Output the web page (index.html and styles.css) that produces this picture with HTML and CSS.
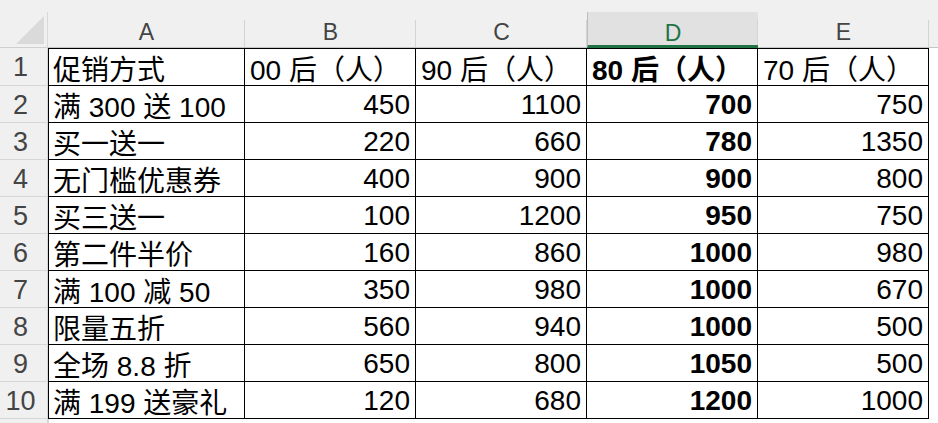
FILE: index.html
```html
<!DOCTYPE html>
<html lang="zh-CN">
<head>
<meta charset="utf-8">
<title>促销方式</title>
<link rel="stylesheet" href="styles.css">
</head>
<body>
<div class="sheet">
  <div class="strip"></div>

  <div class="corner"><svg width="30" height="30" viewBox="0 0 30 30"><polygon points="29,1 29,29 1,29" fill="#dadada"/></svg></div>
  <div class="colh">A</div>
  <div class="colh">B</div>
  <div class="colh">C</div>
  <div class="colh sel">D</div>
  <div class="colh">E</div>
  <div class="colh fill"></div>

  <div class="rowh">1</div>
  <div class="c ca r1">促销方式</div>
  <div class="c r1">00 后（人）</div>
  <div class="c r1">90 后（人）</div>
  <div class="c r1 b">80 后（人）</div>
  <div class="c r1">70 后（人）</div>
  <div class="fillc"></div>

  <div class="rowh">2</div>
  <div class="c ca">满 300 送 100</div>
  <div class="c num">450</div>
  <div class="c num">1100</div>
  <div class="c num b">700</div>
  <div class="c num">750</div>
  <div class="fillc"></div>

  <div class="rowh">3</div>
  <div class="c ca">买一送一</div>
  <div class="c num">220</div>
  <div class="c num">660</div>
  <div class="c num b">780</div>
  <div class="c num">1350</div>
  <div class="fillc"></div>

  <div class="rowh">4</div>
  <div class="c ca">无门槛优惠券</div>
  <div class="c num">400</div>
  <div class="c num">900</div>
  <div class="c num b">900</div>
  <div class="c num">800</div>
  <div class="fillc"></div>

  <div class="rowh">5</div>
  <div class="c ca">买三送一</div>
  <div class="c num">100</div>
  <div class="c num">1200</div>
  <div class="c num b">950</div>
  <div class="c num">750</div>
  <div class="fillc"></div>

  <div class="rowh">6</div>
  <div class="c ca">第二件半价</div>
  <div class="c num">160</div>
  <div class="c num">860</div>
  <div class="c num b">1000</div>
  <div class="c num">980</div>
  <div class="fillc"></div>

  <div class="rowh">7</div>
  <div class="c ca">满 100 减 50</div>
  <div class="c num">350</div>
  <div class="c num">980</div>
  <div class="c num b">1000</div>
  <div class="c num">670</div>
  <div class="fillc"></div>

  <div class="rowh">8</div>
  <div class="c ca">限量五折</div>
  <div class="c num">560</div>
  <div class="c num">940</div>
  <div class="c num b">1000</div>
  <div class="c num">500</div>
  <div class="fillc"></div>

  <div class="rowh">9</div>
  <div class="c ca">全场 8.8 折</div>
  <div class="c num">650</div>
  <div class="c num">800</div>
  <div class="c num b">1050</div>
  <div class="c num">500</div>
  <div class="fillc"></div>

  <div class="rowh">10</div>
  <div class="c ca">满 199 送豪礼</div>
  <div class="c num">120</div>
  <div class="c num">680</div>
  <div class="c num b">1200</div>
  <div class="c num">1000</div>
  <div class="fillc"></div>

  <div class="rowh last"></div>
  <div class="tail"></div>
</div>
</body>
</html>
```

FILE: styles.css
```css
* { box-sizing: border-box; }
html, body {
  margin: 0;
  padding: 0;
  background: #ffffff;
  width: 938px;
  height: 423px;
  overflow: hidden;
}
.sheet {
  display: grid;
  grid-template-columns: 48px 197px 171px 171px 171px 171px 1fr;
  grid-template-rows: 12px 36px 38px repeat(9, 37px) 1fr;
  width: 938px;
  height: 423px;
  font-family: "Liberation Sans", "Noto Sans CJK SC", sans-serif;
  color: #000;
}
.strip {
  grid-column: 1 / -1;
  background: #f0f0f0;
}
.corner {
  background: #f0f0f0;
  border-bottom: 1px solid #cfcfcf;
  border-right: 1px solid #d8d8d8;
  display: flex;
  align-items: flex-start;
  padding: 3px 0 0 15px;
}
.colh {
  position: relative;
  background: #f0f0f0;
  border-bottom: 1px solid #c6c6c6;
  color: #444;
  font-size: 23px;
  display: flex;
  align-items: center;
  justify-content: center;
  padding-top: 6px;
}
.colh::after {
  content: "";
  position: absolute;
  right: 0;
  top: 8px;
  bottom: 0;
  width: 1px;
  background: #d4d4d4;
}
.colh.fill::after { display: none; }
.colh.sel {
  background: #e1e1e1;
  color: #217346;
  border-bottom: 3px solid #217346;
  border-left: 1px solid #bdbdbd;
  padding-top: 9px;
}
.rowh {
  background: #f0f0f0;
  border-bottom: 1px solid #d6d6d6;
  border-right: 1px solid #d6d6d6;
  color: #444;
  font-size: 27px;
  display: flex;
  align-items: center;
  justify-content: center;
  padding: 2px 6px 0 0;
}
.rowh.last { border-bottom: none; }
.c {
  border-right: 1px solid #000;
  border-bottom: 1px solid #000;
  font-size: 28px;
  display: flex;
  align-items: center;
  padding: 2px 5px 0 5px;
  white-space: nowrap;
  overflow: hidden;
}
.ca { border-left: 1px solid #000; padding-left: 4px; }
.r1 { border-top: 1px solid #000; }
.num { justify-content: flex-end; }
.b { font-weight: bold; }
.fillc { background: #fff; }
.tail {
  grid-column: 2 / -1;
  background: #fff;
  border-left: 1px solid #d6d6d6;
}
```
